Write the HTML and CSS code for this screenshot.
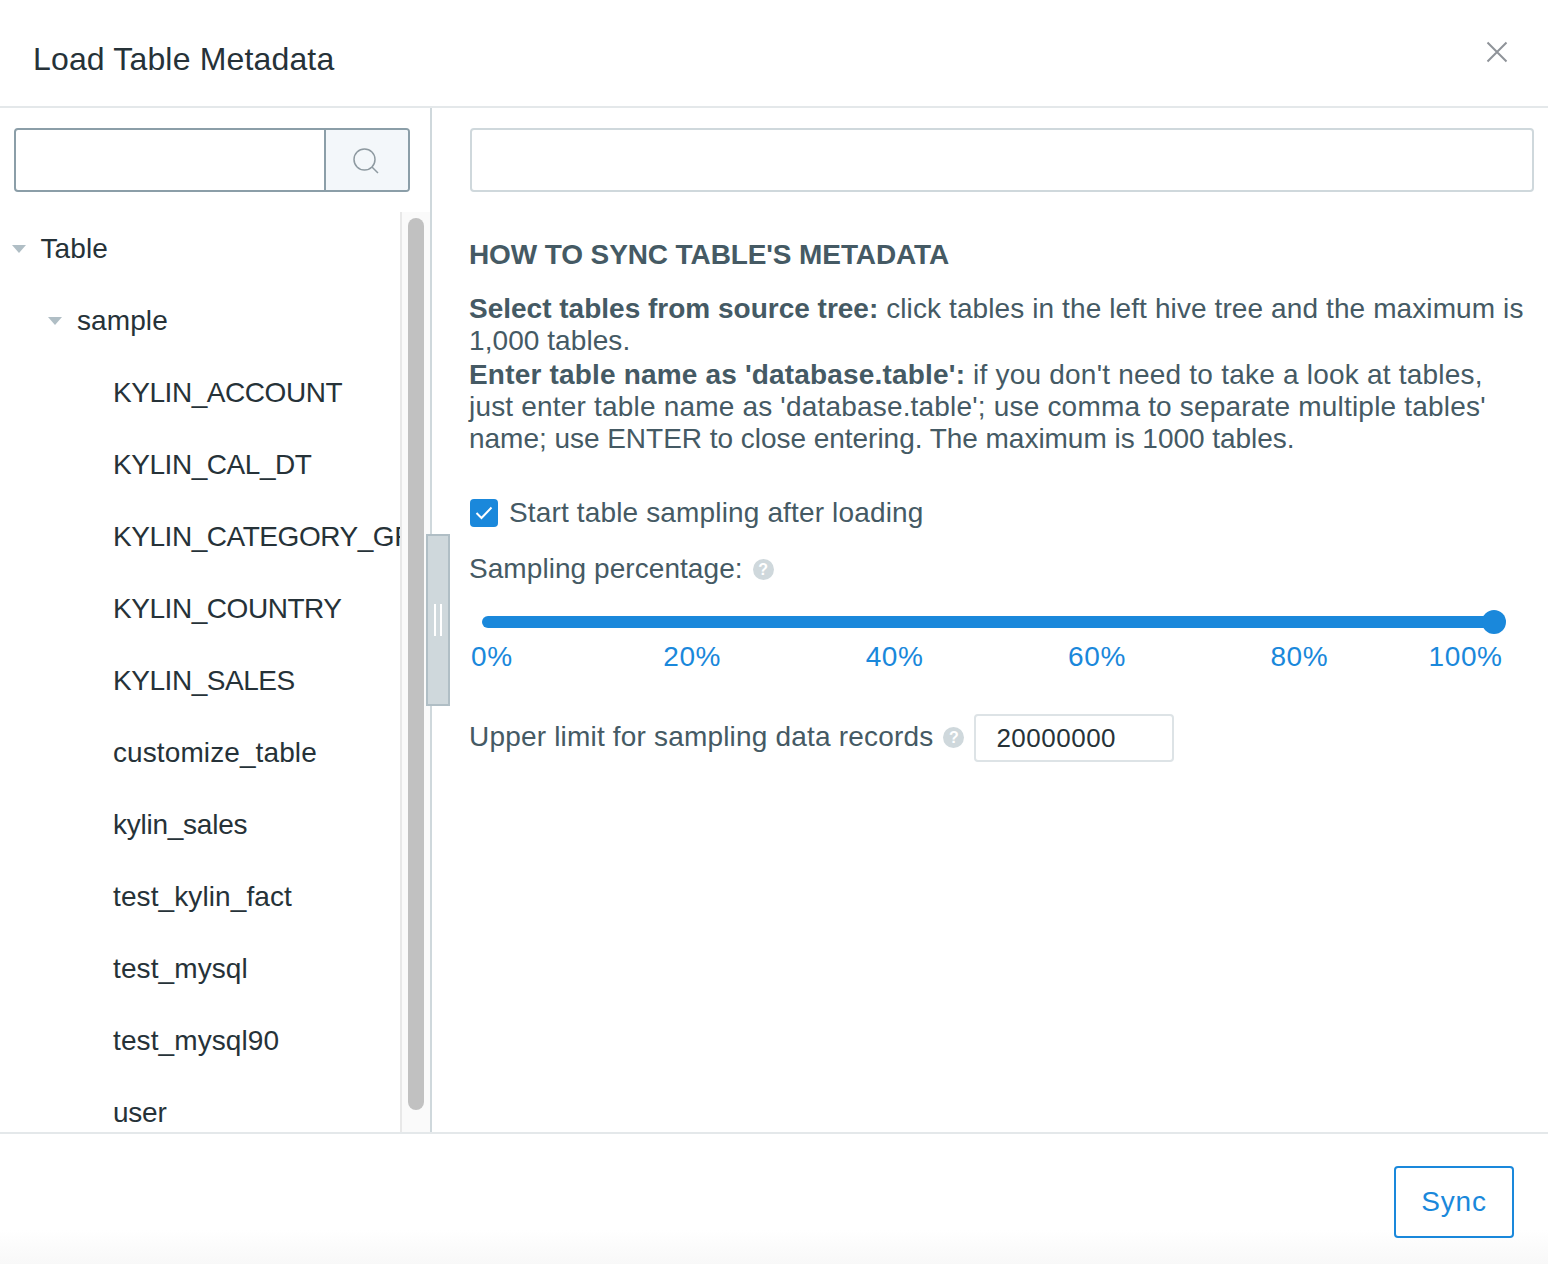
FILE: index.html
```html
<!DOCTYPE html>
<html lang="en">
<head>
    <meta charset="UTF-8">
    <title>Load Table Metadata</title>
    <link rel="stylesheet" href="styles.css">
</head>
<body>
    <div class="modal">
        <header class="modal-header">
            <h3 class="modal-title">Load Table Metadata</h3>
            <svg class="close-icon" width="24" height="24" viewBox="0 0 24 24"><path d="M2.5 2.500 21.500 21.500M21.500 2.500 2.500 21.500"/></svg>
        </header>

        <div class="modal-body">
            <aside class="sidebar">
                <div class="search-box">
                    <input class="search-input" type="text">
                    <span class="search-btn">
                        <svg width="26" height="26" viewBox="0 0 26 26"><circle cx="11.500" cy="11.500" r="10.500"/><path d="M19 19 25 25"/></svg>
                    </span>
                </div>
                <div class="tree-wrap">
                    <ul class="tree">
                        <li class="tree-row"><span class="caret"></span>Table</li>
                        <li class="tree-row level-1"><span class="caret"></span>sample</li>
                        <li class="tree-row level-2 upper">KYLIN_ACCOUNT</li>
                        <li class="tree-row level-2 upper">KYLIN_CAL_DT</li>
                        <li class="tree-row level-2 upper">KYLIN_CATEGORY_GROUPINGS</li>
                        <li class="tree-row level-2 upper">KYLIN_COUNTRY</li>
                        <li class="tree-row level-2 upper">KYLIN_SALES</li>
                        <li class="tree-row level-2">customize_table</li>
                        <li class="tree-row level-2 narrow">kylin_sales</li>
                        <li class="tree-row level-2">test_kylin_fact</li>
                        <li class="tree-row level-2">test_mysql</li>
                        <li class="tree-row level-2">test_mysql90</li>
                        <li class="tree-row level-2 narrow">user</li>
                    </ul>
                    <div class="scroll-track"><div class="scroll-thumb"></div></div>
                </div>
                <div class="drag-handle"><i></i><i></i></div>
            </aside>

            <main class="content">
                <input class="table-input" type="text">

                <h4 class="how-title">HOW TO SYNC TABLE'S METADATA</h4>
                <p class="how-text"><b class="tight">Select tables from source tree:</b> <span class="line-a">click tables in the left hive tree and the maximum is</span><br>1,000 tables.</p>
                <p class="how-text second"><b class="wide">Enter table name as 'database.table':</b> <span class="line-b">if you don't need to take a look at tables,</span><br><span class="line-c">just enter table name as 'database.table'; use comma to separate multiple tables'</span><br><span class="line-d">name; use ENTER to close entering. The maximum is 1000 tables.</span></p>

                <label class="check-row">
                    <span class="checkbox">
                        <svg width="18" height="14" viewBox="0 0 18 14"><path d="M1.500 7 6.500 12 16.500 1.500"/></svg>
                    </span>
                    Start table sampling after loading
                </label>

                <div class="sampling-label">Sampling percentage: <span class="help">?</span></div>

                <div class="slider">
                    <div class="slider-track"></div>
                    <div class="slider-thumb"></div>
                </div>
                <div class="marks">
                    <span>0%</span>
                    <span>20%</span>
                    <span>40%</span>
                    <span>60%</span>
                    <span>80%</span>
                    <span>100%</span>
                </div>

                <div class="limit-row">
                    <span class="limit-label">Upper limit for sampling data records</span>
                    <span class="help">?</span>
                    <input class="limit-input" type="text" value="20000000">
                </div>
            </main>
        </div>

        <footer class="modal-footer">
            <button class="sync-btn">Sync</button>
        </footer>
    </div>
</body>
</html>
```

FILE: styles.css
```css
* {
    box-sizing: border-box;
}
html, body {
    margin: 0;
    height: 100%;
}
body {
    font-family: "Liberation Sans", Arial, sans-serif;
    background-color: #fff;
    color: #455a64;
    overflow: hidden;
}
.modal {
    height: 1264px;
    display: flex;
    flex-direction: column;
}
.modal-header {
    height: 108px;
    flex: none;
    display: flex;
    justify-content: space-between;
    border-bottom: 2px solid #e4e8ea;
    padding: 40px 39px 0 33px;
}
.modal-title {
    margin: 0;
    font-size: 32px;
    line-height: 38px;
    font-weight: normal;
    letter-spacing: 0.160px;
    color: #263238;
}
.close-icon path {
    fill: none;
    stroke: #8f9399;
    stroke-width: 2;
}
.modal-body {
    height: 1024px;
    flex: none;
    display: flex;
}

/* left side */
.sidebar {
    position: relative;
    width: 432px;
    flex: none;
    border-right: 2px solid #cfd8dc;
    padding-top: 20px;
}
.search-box {
    display: flex;
    width: 396px;
    height: 64px;
    margin-left: 14px;
    border: 2px solid #8b9ea8;
    border-radius: 4px;
}
.search-input {
    flex: 1;
    min-width: 0;
    border: none;
    background: none;
    outline: none;
}
.search-btn {
    width: 84px;
    flex: none;
    display: flex;
    align-items: center;
    justify-content: center;
    background-color: #f3f7fa;
    border-left: 2px solid #8b9ea8;
    padding: 2px 2px 0 0;
    border-radius: 0 2px 2px 0;
}
.search-btn svg {
    fill: none;
    stroke: #8e9aa1;
    stroke-width: 1.500;
}
.tree-wrap {
    display: flex;
    height: 920px;
    margin-top: 20px;
    overflow: hidden;
}
.tree {
    width: 400px;
    flex: none;
    list-style: none;
    margin: 0;
    padding: 0;
    overflow: hidden;
}
.tree-row {
    display: flex;
    align-items: center;
    height: 72px;
    padding: 2px 0 0 40.500px;
    position: relative;
    font-size: 28px;
    letter-spacing: 0.100px;
    color: #263238;
    white-space: nowrap;
}
.level-1 {
    padding-left: 77px;
}
.level-2 {
    padding-left: 113px;
}
.upper {
    letter-spacing: -0.450px;
}
.narrow {
    letter-spacing: -0.250px;
}
.caret {
    position: absolute;
    left: 12px;
    top: 33px;
    border-style: solid;
    border-width: 8px 7px 0;
    border-color: #b0bec5 transparent transparent;
}
.level-1 .caret {
    left: 48px;
}
.scroll-track {
    width: 30px;
    flex: none;
    background-color: #fafafa;
    border-left: 2px solid #e8e8e8;
    padding: 6px 6px 0;
}
.scroll-thumb {
    height: 892px;
    background-color: #c1c1c1;
    border-radius: 8px;
}
.drag-handle {
    position: absolute;
    left: 426px;
    top: 426px;
    width: 24px;
    height: 172px;
    display: flex;
    align-items: center;
    justify-content: center;
    gap: 4px;
    background-color: #cfd8dc;
    border: 2px solid #b0bec5;
}
.drag-handle i {
    width: 2px;
    height: 32px;
    background-color: #fff;
}

/* right side */
.content {
    flex: 1;
    padding: 20px 14px 0 38px;
}
.table-input {
    display: block;
    width: 100%;
    height: 64px;
    border: 2px solid #cfd8dc;
    border-radius: 4px;
    outline: none;
}
.how-title {
    margin: 45px 0 20px -1px;
    font-size: 28px;
    line-height: 36px;
    font-weight: bold;
    letter-spacing: -0.110px;
    color: #455a64;
}
.how-text {
    margin: 0 0 0 -1px;
    font-size: 28px;
    line-height: 32px;
    letter-spacing: 0.070px;
    white-space: nowrap;
}
.how-text.second {
    margin-top: 2px;
}
.tight {
    letter-spacing: 0;
}
.wide {
    letter-spacing: 0.180px;
}
.line-a {
    letter-spacing: 0.105px;
}
.line-b {
    letter-spacing: 0.220px;
}
.line-c {
    letter-spacing: 0.190px;
}
.line-d {
    letter-spacing: -0.030px;
}
.check-row {
    display: flex;
    align-items: center;
    gap: 11px;
    margin-top: 43px;
    height: 30px;
    font-size: 28px;
    letter-spacing: 0.150px;
}
.checkbox {
    width: 28px;
    height: 28px;
    display: flex;
    align-items: center;
    justify-content: center;
    background-color: #1a88db;
    border-radius: 4px;
}
.checkbox svg {
    fill: none;
    stroke: #fff;
    stroke-width: 2;
}
.sampling-label {
    margin: 23px 0 0 -1px;
    height: 36px;
    line-height: 36px;
    font-size: 28px;
    letter-spacing: 0.060px;
    display: flex;
    align-items: center;
    gap: 10px;
}
.help {
    display: inline-block;
    flex: none;
    width: 21px;
    height: 21px;
    border-radius: 50%;
    background-color: #cfd8dc;
    color: #fff;
    font-size: 16px;
    line-height: 21px;
    font-weight: bold;
    letter-spacing: 0;
    text-align: center;
}
.slider {
    position: relative;
    height: 12px;
    margin: 29px 40px 0 12px;
}
.slider-track {
    height: 12px;
    background-color: #1a88db;
    border-radius: 6px;
}
.slider-thumb {
    position: absolute;
    right: -12px;
    top: -6px;
    width: 24px;
    height: 24px;
    border-radius: 50%;
    background-color: #1a88db;
}
.marks {
    display: grid;
    grid-template-columns: 121px repeat(4, 202.400px) 102px;
    margin-top: 13px;
    font-size: 28px;
    line-height: 32px;
    letter-spacing: 0.600px;
    color: #1a88db;
    text-align: center;
}
.marks span:first-child {
    text-align: left;
    padding-left: 1px;
}
.marks span:last-child {
    text-align: right;
}
.limit-row {
    display: flex;
    align-items: center;
    gap: 10px;
    margin: 41px 0 0 -1px;
    height: 48px;
    font-size: 28px;
}
.limit-label {
    margin-top: -2px;
    letter-spacing: 0.185px;
}
.limit-row .help {
    margin-top: -2px;
}
.limit-input {
    width: 200px;
    height: 48px;
    border: 2px solid #dde3e6;
    border-radius: 4px;
    padding: 0 20px;
    font: 26px "Liberation Sans", Arial, sans-serif;
    letter-spacing: 0.500px;
    color: #263238;
    outline: none;
}

.modal-footer {
    flex: 1;
    display: flex;
    justify-content: flex-end;
    align-items: flex-start;
    border-top: 2px solid #e4e8ea;
    padding: 32px 34px 0 0;
    background: linear-gradient(to bottom, #fff 96px, #f8f8f8 130px);
}
.sync-btn {
    width: 120px;
    height: 72px;
    background-color: #fff;
    border: 2px solid #1a88db;
    border-radius: 4px;
    color: #1a88db;
    font: 28px "Liberation Sans", Arial, sans-serif;
    letter-spacing: 0.800px;
}
```
